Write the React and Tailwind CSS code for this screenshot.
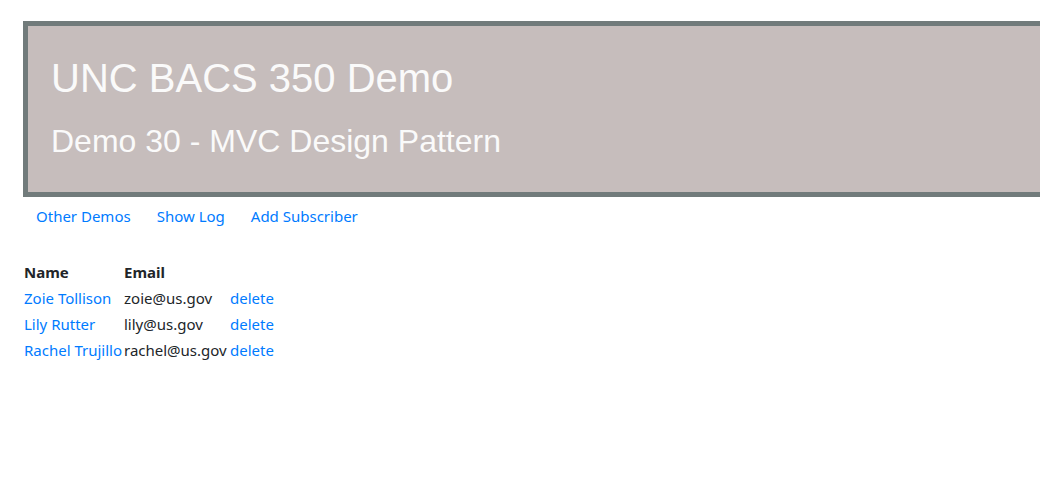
import React from 'react';

const subscribers = [
  { name: 'Zoie Tollison', email: 'zoie@us.gov' },
  { name: 'Lily Rutter', email: 'lily@us.gov' },
  { name: 'Rachel Trujillo', email: 'rachel@us.gov' },
];

export default function App() {
  return (
    <div className="w-[1040px] h-[488px] overflow-hidden bg-white text-[#212529] font-['Noto_Sans',sans-serif] text-[15px]">
      <div className="pt-[21px] pl-[23px]">
        {/* header box runs off the right side */}
        <header className="w-[1100px] h-[176px] box-border border-[5px] border-[#717b7b] bg-[#c6bdbc] pt-[28px] pl-[23px] font-['Liberation_Sans',Arial,sans-serif] text-[#fafafa]">
          <h1 className="text-[40px] leading-[48px] mb-[20px]">UNC BACS 350 Demo</h1>
          <h2 className="text-[32px] leading-[38px]">Demo 30 - MVC Design Pattern</h2>
        </header>
      </div>

      <nav className="flex pl-[36px] pt-[7px] pb-[9px] leading-6 gap-[26px] text-[#007bff]">
        <a href="#">Other Demos</a>
        <a href="#">Show Log</a>
        <a href="#">Add Subscriber</a>
      </nav>

      <table className="ml-[24px] mt-[22px] border-collapse">
        <thead>
          <tr className="h-[26px]">
            <th className="w-[100px] p-0 text-left font-bold">Name</th>
            <th className="w-[106px] p-0 text-left font-bold">Email</th>
            <th className="p-0"></th>
          </tr>
        </thead>
        <tbody>
          {subscribers.map(s => (
            <tr key={s.email} className="h-[26px]">
              <td className="p-0 whitespace-nowrap text-[#007bff]">{s.name}</td>
              <td className="p-0 whitespace-nowrap">{s.email}</td>
              <td className="p-0 text-[#007bff]">delete</td>
            </tr>
          ))}
        </tbody>
      </table>
    </div>
  );
}
